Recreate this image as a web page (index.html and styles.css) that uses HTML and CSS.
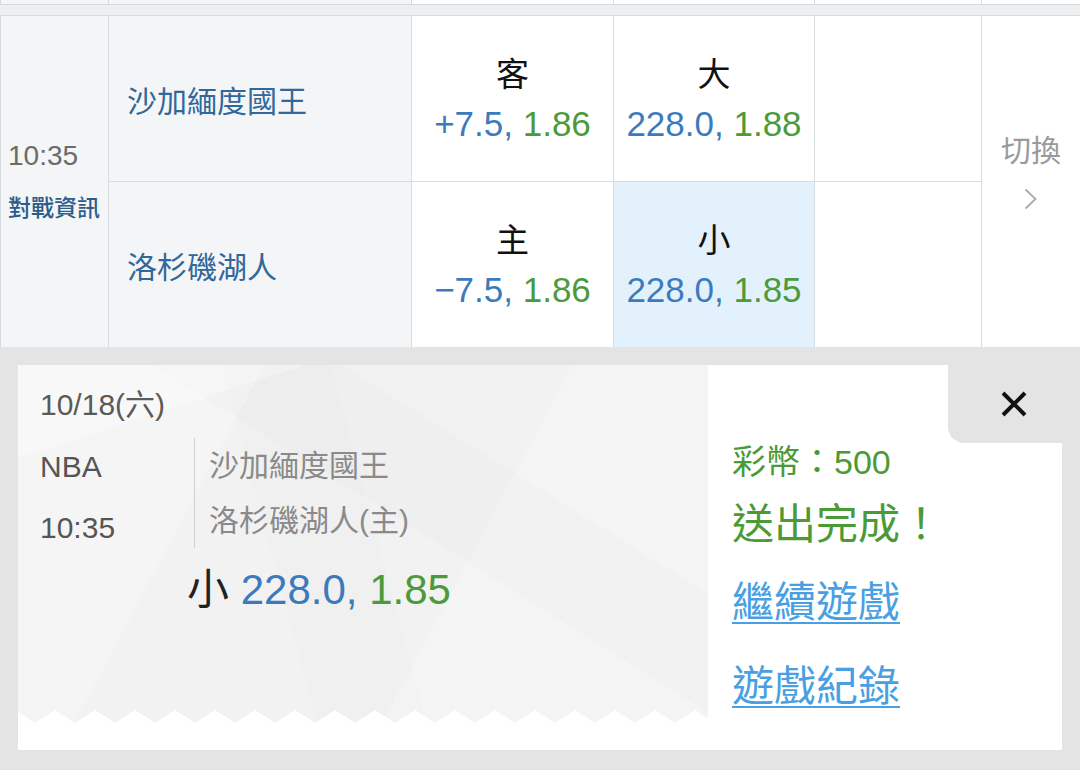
FILE: index.html
```html
<!DOCTYPE html>
<html lang="zh-Hant">
<head>
<meta charset="utf-8">
<title>投注完成</title>
<link rel="stylesheet" href="styles.css">
</head>
<body>
<div class="prev">
  <div class="pc gray"></div><div class="pc gray"></div><div class="pc"></div><div class="pc"></div><div class="pc"></div><div class="pc"></div>
</div>
<div class="band"></div>
<div class="table">
  <div class="c-time">
    <div class="time">10:35</div>
    <div class="info">對戰資訊</div>
  </div>
  <div class="team">沙加緬度國王</div>
  <div class="odds">
    <div class="lbl">客</div>
    <div class="val"><span class="b">+7.5,</span> <span class="g">1.86</span></div>
  </div>
  <div class="odds">
    <div class="lbl">大</div>
    <div class="val"><span class="b">228.0,</span> <span class="g">1.88</span></div>
  </div>
  <div class="empty"></div>
  <div class="c-switch">
    <div class="sw">切換</div>
    <svg class="chev" width="14" height="22" viewBox="0 0 14 22"><path d="M1.5 1.5 L11.5 11 L1.5 20.5" fill="none" stroke="#ababab" stroke-width="1.8"/></svg>
  </div>
  <div class="team">洛杉磯湖人</div>
  <div class="odds">
    <div class="lbl">主</div>
    <div class="val"><span class="b">&#8722;7.5,</span> <span class="g">1.86</span></div>
  </div>
  <div class="odds sel">
    <div class="lbl">小</div>
    <div class="val"><span class="b">228.0,</span> <span class="g">1.85</span></div>
  </div>
  <div class="empty"></div>
</div>

<div class="ticket">
  <div class="left">
    <div class="pattern">
      <div class="date">10/18(六)</div>
      <div class="game">
        <div class="meta">
          <div class="m1">NBA</div>
          <div class="m2">10:35</div>
        </div>
        <div class="teams">
          <div class="n1">沙加緬度國王</div>
          <div class="n2">洛杉磯湖人(主)</div>
        </div>
      </div>
      <div class="pick"><span class="pk">小</span> <span class="b">228.0,</span> <span class="g">1.85</span></div>
    </div>
  </div>
  <div class="right">
    <div class="close"><svg width="28" height="28" viewBox="0 0 28 28"><path d="M3 3 L25 25 M25 3 L3 25" stroke="#111" stroke-width="4" stroke-linecap="butt"/></svg></div>
    <div class="coin">彩幣：500</div>
    <div class="done">送出完成！</div>
    <a class="link l1" href="#">繼續遊戲</a>
    <a class="link l2" href="#">遊戲紀錄</a>
  </div>
</div>
</body>
</html>
```
FILE: styles.css
```css
* { box-sizing: border-box; }
html, body { margin: 0; padding: 0; }
body {
  width: 1080px;
  height: 770px;
  overflow: hidden;
  background: #e4e4e4;
  font-family: "Liberation Sans", "Noto Sans CJK TC", sans-serif;
}

.prev {
  display: grid;
  grid-template-columns: 107px 302px 201px 200px 166px 98px;
  column-gap: 1px;
  padding-left: 1px;
  height: 4px;
  background: #d6dbe0;
}
.pc { background: #fff; }
.pc.gray { background: #f4f5f6; }

.band {
  height: 12px;
  background: #eceeef;
  border-top: 1px solid #d6dbe0;
  border-bottom: 1px solid #d6dbe0;
}

.table {
  display: grid;
  grid-template-columns: 107px 302px 201px 200px 166px 98px;
  grid-template-rows: 165px 165px;
  gap: 1px;
  padding-left: 1px;
  background: #d6dbe0;
}

.c-time {
  grid-row: 1 / 3;
  grid-column: 1;
  background: #f4f5f6;
  display: flex;
  flex-direction: column;
  justify-content: center;
  padding: 0 0 4px 7px;
}
.time {
  font-size: 28px;
  line-height: 40px;
  color: #6b6b6b;
}
.info {
  margin-top: 17px;
  font-size: 23px;
  line-height: 30px;
  color: #2b5d8c;
  font-weight: 500;
}

.team {
  background: #f4f5f6;
  display: flex;
  align-items: center;
  padding-left: 18px;
  font-size: 30px;
  color: #31679b;
}

.odds {
  background: #fff;
  display: flex;
  flex-direction: column;
  align-items: center;
  justify-content: center;
  padding-top: 3px;
}
.odds.sel { background: #e3f1fc; }
.lbl {
  font-size: 33px;
  line-height: 40px;
  color: #111;
}
.val {
  margin-top: 7px;
  font-size: 35px;
  line-height: 44px;
  white-space: nowrap;
}
.b { color: #3b7bbd; }
.g { color: #4b9a3b; }

.empty { background: #fff; }

.c-switch {
  grid-row: 1 / 3;
  grid-column: 6;
  background: #fff;
  display: flex;
  flex-direction: column;
  align-items: center;
  justify-content: center;
  padding-bottom: 23px;
}
.sw {
  font-size: 30px;
  line-height: 40px;
  color: #9a9a9a;
}
.chev { margin-top: 17px; display: block; }

/* ticket */
.ticket {
  position: relative;
  margin: 18px 18px 0 18px;
  height: 385px;
  background: #fff;
  display: flex;
}
.left { width: 690px; }
.pattern {
  height: 358px;
  padding: 20px 0 0 22px;
  background:
    conic-gradient(from 0deg at 50% 0, transparent 0 123deg, #fff 123deg 237deg, transparent 237deg) 17px 100% / 40px 13px repeat-x,
    linear-gradient(162deg, rgba(255,255,255,.3) 0 16%, transparent 16%),
    linear-gradient(32deg, transparent 0 56%, rgba(0,0,0,.01) 56% 71%, transparent 71%),
    linear-gradient(118deg, rgba(255,255,255,.25) 0 28%, transparent 28% 63%, rgba(255,255,255,.2) 63%),
    linear-gradient(75deg, transparent 0 38%, rgba(0,0,0,.008) 38% 52%, transparent 52%),
    #f2f2f2;
}
.date {
  font-size: 30px;
  line-height: 40px;
  color: #5a5a5a;
}
.game {
  display: flex;
  margin-top: 13px;
  height: 110px;
}
.meta {
  width: 155px;
  border-right: 1px solid #d0d0d0;
  padding-top: 9px;
  font-size: 30px;
  line-height: 40px;
  color: #555;
}
.m2 { margin-top: 21px; }
.teams {
  padding: 8px 0 0 14px;
  font-size: 30px;
  line-height: 40px;
  color: #8a8a8a;
}
.n2 { margin-top: 15px; }
.pick {
  margin: 17px 0 0 147px;
  font-size: 42px;
  line-height: 50px;
  white-space: nowrap;
}
.pk { color: #222; }

.right {
  flex: 1;
  padding: 75px 0 0 24px;
  display: flex;
  flex-direction: column;
  align-items: flex-start;
}
.close {
  position: absolute;
  top: 0;
  right: -18px;
  width: 132px;
  height: 78px;
  background: #e4e4e4;
  border-bottom-left-radius: 16px;
  display: flex;
  align-items: center;
  justify-content: center;
}
.close svg { display: block; }
.coin {
  font-size: 34px;
  line-height: 44px;
  color: #4b9a36;
}
.done {
  margin-top: 13px;
  font-size: 42px;
  line-height: 56px;
  color: #4b9a36;
}
.link {
  font-size: 42px;
  line-height: 56px;
  color: #4a9fe2;
  text-decoration: underline;
  text-decoration-thickness: 2px;
  text-underline-offset: 5px;
}
.l1 { margin-top: 22px; }
.l2 { margin-top: 28px; }
```
